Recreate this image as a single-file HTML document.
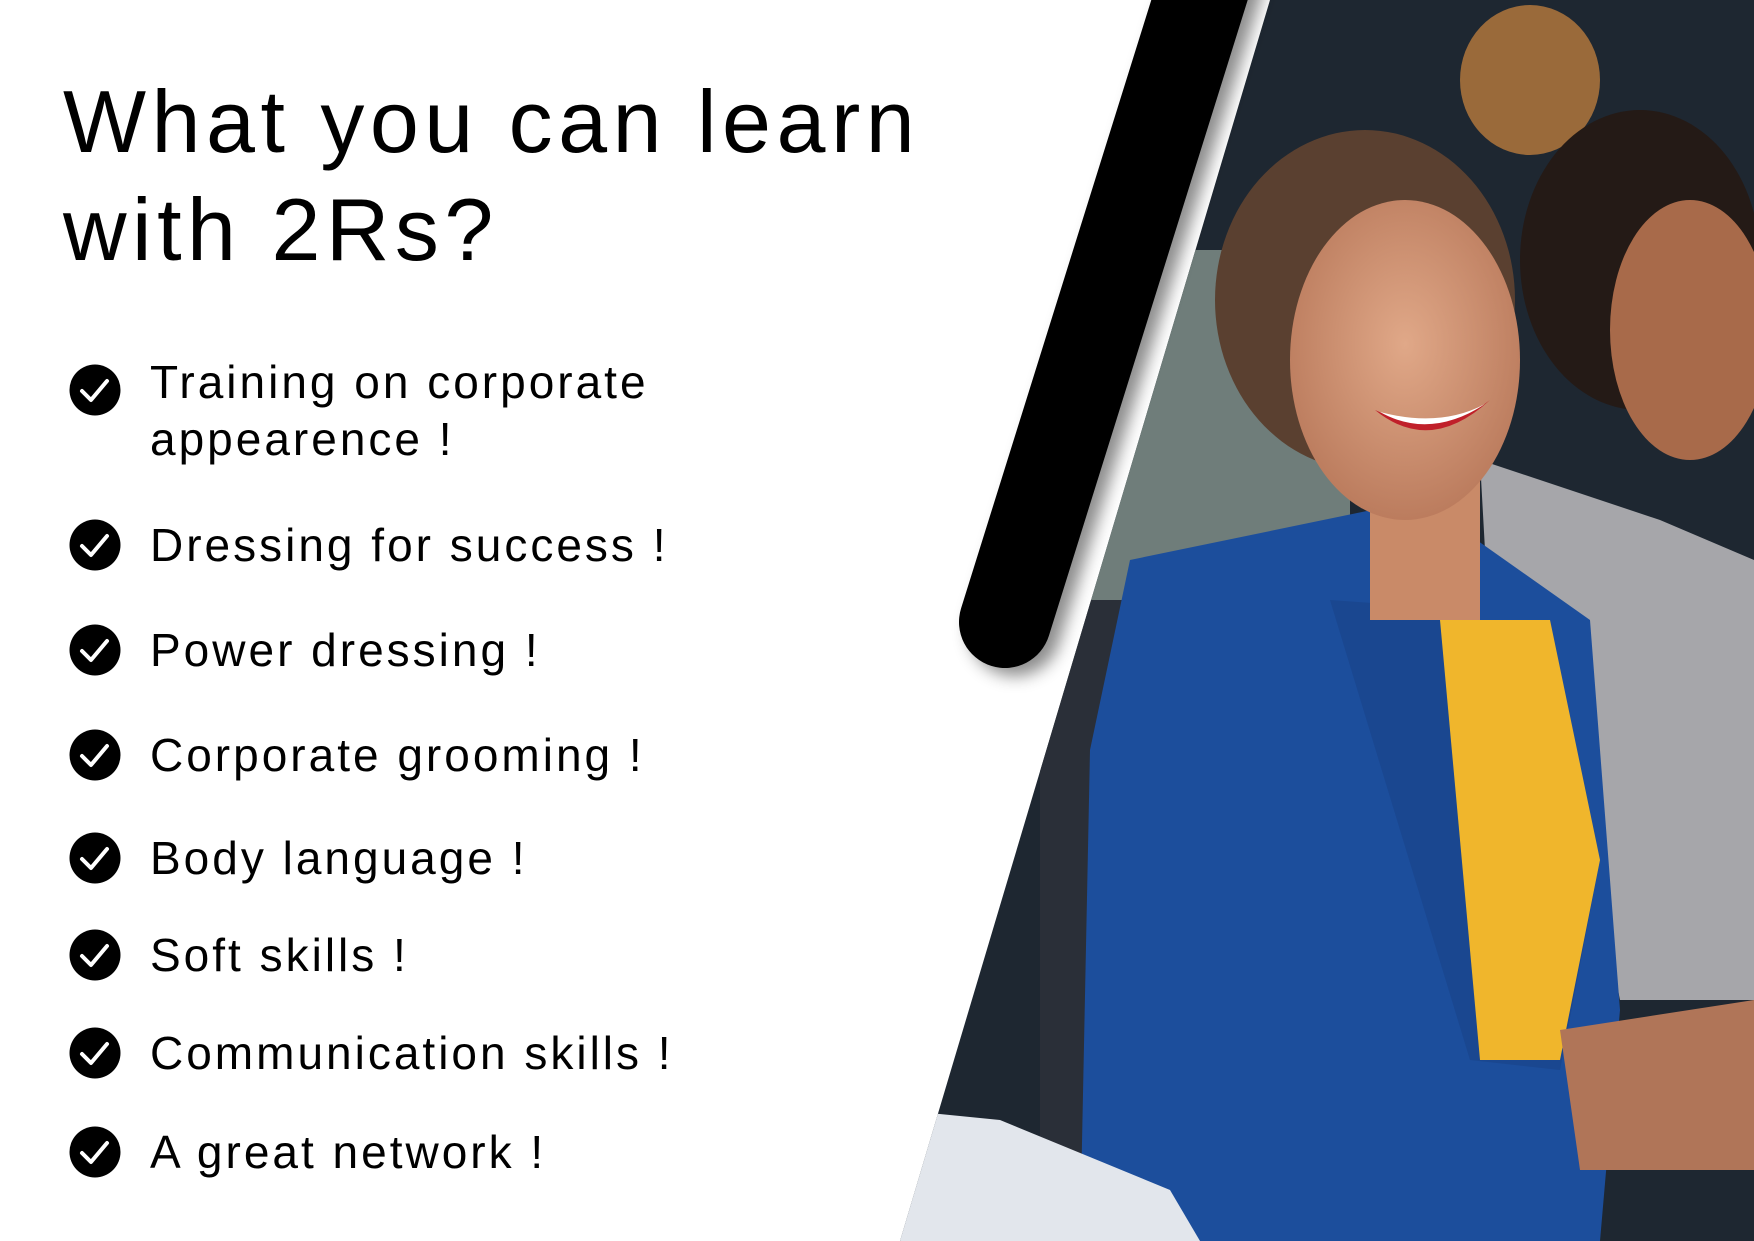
<!DOCTYPE html>
<html><head><meta charset="utf-8"><style>
html,body{margin:0;padding:0;background:#fff;}
body{width:1754px;height:1241px;position:relative;overflow:hidden;font-family:"Liberation Sans",sans-serif;color:#000;}
h1{position:absolute;left:63px;top:68px;margin:0;font-weight:normal;font-size:88px;line-height:108px;letter-spacing:5.5px;}
.item{position:absolute;left:69px;height:52px;}
.item svg{position:absolute;left:0;top:0;}
.item span{position:absolute;left:81px;top:50%;transform:translateY(-50%);font-size:46px;line-height:56px;white-space:nowrap;letter-spacing:3px;}
#art{position:absolute;left:0;top:0;}
</style></head><body>
<svg id="art" width="1754" height="1241" viewBox="0 0 1754 1241">
<defs>
<clipPath id="cp"><polygon points="1270,0 1754,0 1754,1241 900,1241"/></clipPath>
<filter id="sh" x="-50%" y="-50%" width="200%" height="200%"><feDropShadow dx="10" dy="8" stdDeviation="8" flood-color="#000" flood-opacity="0.45"/></filter>
<radialGradient id="face" cx="0.5" cy="0.45" r="0.6"><stop offset="0" stop-color="#e0a888"/><stop offset="1" stop-color="#b8785a"/></radialGradient>
</defs>
<g clip-path="url(#cp)">
<rect x="880" y="0" width="880" height="1241" fill="#1e2731"/>
<rect x="1050" y="250" width="300" height="450" fill="#6f7d7a"/>
<rect x="1040" y="600" width="200" height="640" fill="#2a2f38"/>
<ellipse cx="1530" cy="80" rx="70" ry="75" fill="#9a6a3a"/>
<ellipse cx="1640" cy="260" rx="120" ry="150" fill="#241a16"/>
<ellipse cx="1690" cy="330" rx="80" ry="130" fill="#a86a4a"/>
<polygon points="1480,460 1660,520 1754,560 1754,1000 1620,1000 1600,900 1500,820" fill="#a6a6aa"/>
<polygon points="1130,560 1420,500 1590,620 1620,1010 1600,1241 1080,1241 1090,750" fill="#1c4e9c"/>
<polygon points="1330,600 1470,610 1600,860 1560,1070 1470,1060" fill="#1a4790"/>
<polygon points="1440,620 1550,620 1600,860 1560,1060 1480,1060" fill="#f0b62c"/>
<rect x="1370" y="430" width="110" height="190" fill="#c98a68"/>
<ellipse cx="1365" cy="300" rx="150" ry="170" fill="#5a4030"/>
<ellipse cx="1405" cy="360" rx="115" ry="160" fill="url(#face)"/>
<path d="M1375 410 Q1430 455 1490 400 Q1440 440 1375 410Z" fill="#c0202a"/>
<path d="M1380 412 Q1430 440 1485 404 Q1440 428 1380 412Z" fill="#fff"/>
<polygon points="1560,1030 1754,1000 1754,1170 1580,1170" fill="#b07558"/>
<polygon points="900,1110 1000,1120 1170,1190 1200,1241 900,1241" fill="#e2e6ec"/>
</g>
<line x1="1212" y1="-40" x2="1005" y2="622" stroke="#000" stroke-width="92" stroke-linecap="round" filter="url(#sh)"/>
</svg>
<h1>What you can learn<br>with 2Rs?</h1>
<div class="item" style="top:364px;height:52px"><svg width="52" height="52" viewBox="0 0 52 52"><circle cx="26" cy="26" r="25.5" fill="#000"/><path d="M13 27 L22 36 L38 17" stroke="#fff" stroke-width="4" fill="none" stroke-linecap="round" stroke-linejoin="round"/></svg><span style="top:-10px;transform:none;line-height:57px">Training on corporate<br>appearence !</span></div>
<div class="item" style="top:519px"><svg width="52" height="52" viewBox="0 0 52 52"><circle cx="26" cy="26" r="25.5" fill="#000"/><path d="M13 27 L22 36 L38 17" stroke="#fff" stroke-width="4" fill="none" stroke-linecap="round" stroke-linejoin="round"/></svg><span>Dressing for success !</span></div>
<div class="item" style="top:624px"><svg width="52" height="52" viewBox="0 0 52 52"><circle cx="26" cy="26" r="25.5" fill="#000"/><path d="M13 27 L22 36 L38 17" stroke="#fff" stroke-width="4" fill="none" stroke-linecap="round" stroke-linejoin="round"/></svg><span>Power dressing !</span></div>
<div class="item" style="top:729px"><svg width="52" height="52" viewBox="0 0 52 52"><circle cx="26" cy="26" r="25.5" fill="#000"/><path d="M13 27 L22 36 L38 17" stroke="#fff" stroke-width="4" fill="none" stroke-linecap="round" stroke-linejoin="round"/></svg><span>Corporate grooming !</span></div>
<div class="item" style="top:832px"><svg width="52" height="52" viewBox="0 0 52 52"><circle cx="26" cy="26" r="25.5" fill="#000"/><path d="M13 27 L22 36 L38 17" stroke="#fff" stroke-width="4" fill="none" stroke-linecap="round" stroke-linejoin="round"/></svg><span>Body language !</span></div>
<div class="item" style="top:929px"><svg width="52" height="52" viewBox="0 0 52 52"><circle cx="26" cy="26" r="25.5" fill="#000"/><path d="M13 27 L22 36 L38 17" stroke="#fff" stroke-width="4" fill="none" stroke-linecap="round" stroke-linejoin="round"/></svg><span>Soft skills !</span></div>
<div class="item" style="top:1027px"><svg width="52" height="52" viewBox="0 0 52 52"><circle cx="26" cy="26" r="25.5" fill="#000"/><path d="M13 27 L22 36 L38 17" stroke="#fff" stroke-width="4" fill="none" stroke-linecap="round" stroke-linejoin="round"/></svg><span>Communication skills !</span></div>
<div class="item" style="top:1126px"><svg width="52" height="52" viewBox="0 0 52 52"><circle cx="26" cy="26" r="25.5" fill="#000"/><path d="M13 27 L22 36 L38 17" stroke="#fff" stroke-width="4" fill="none" stroke-linecap="round" stroke-linejoin="round"/></svg><span>A great network !</span></div>
</body></html>
